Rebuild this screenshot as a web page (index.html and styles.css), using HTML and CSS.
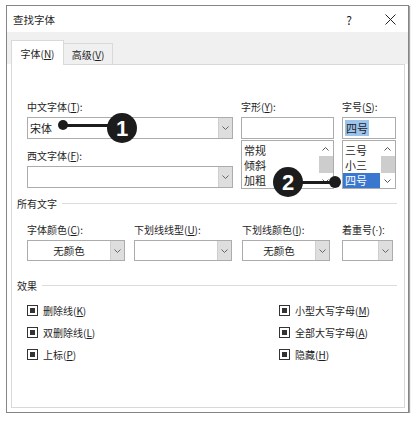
FILE: index.html
```html
<!DOCTYPE html>
<html lang="zh-CN">
<head>
  <meta charset="UTF-8" />
  <title>查找字体</title>
  <link rel="stylesheet" href="styles.css">
</head>
<body>

  <div class="dialog">
    <div class="titlebar">
      <span class="title">查找字体</span>
      <span class="help">?</span>
      <svg class="close" width="11" height="11" viewBox="0 0 11 11">
        <path d="M0.5 0.5 L10.5 10.5 M10.5 0.5 L0.5 10.5" stroke="#222" stroke-width="1" fill="none"/>
      </svg>
    </div>

    <div class="tabs">
      <div class="tab active">字体(<u>N</u>)</div>
      <div class="tab">高级(<u>V</u>)</div>
    </div>

    <div class="panel">
      <!-- font names, style, size -->
      <div class="fonts">
        <div class="col col-name">
          <label>中文字体(<u>T</u>):</label>
          <div class="combo">
            <span class="value">宋体</span>
            <span class="arrow"><svg width="7" height="4" viewBox="0 0 7 4"><path d="M0.5 0.5 L3.5 3.5 L6.5 0.5" stroke="#666" fill="none"/></svg></span>
          </div>
          <label class="second">西文字体(<u>F</u>):</label>
          <div class="combo">
            <span class="value"></span>
            <span class="arrow"><svg width="7" height="4" viewBox="0 0 7 4"><path d="M0.5 0.5 L3.5 3.5 L6.5 0.5" stroke="#666" fill="none"/></svg></span>
          </div>
        </div>

        <div class="col col-style">
          <label>字形(<u>Y</u>):</label>
          <div class="field"></div>
          <div class="list">
            <div class="items">
              <div class="item">常规</div>
              <div class="item">倾斜</div>
              <div class="item">加粗</div>
            </div>
            <div class="scroll">
              <span class="btn"><svg width="7" height="4" viewBox="0 0 7 4"><path d="M0.5 3.5 L3.5 0.5 L6.5 3.5" stroke="#555" fill="none"/></svg></span>
              <span class="thumb"></span>
              <span class="btn"><svg width="7" height="4" viewBox="0 0 7 4"><path d="M0.5 0.5 L3.5 3.5 L6.5 0.5" stroke="#555" fill="none"/></svg></span>
            </div>
          </div>
        </div>

        <div class="col col-size">
          <label>字号(<u>S</u>):</label>
          <div class="field"><span class="picked">四号</span></div>
          <div class="list">
            <div class="items">
              <div class="item">三号</div>
              <div class="item">小三</div>
              <div class="item selected">四号</div>
            </div>
            <div class="scroll">
              <span class="btn"><svg width="7" height="4" viewBox="0 0 7 4"><path d="M0.5 3.5 L3.5 0.5 L6.5 3.5" stroke="#555" fill="none"/></svg></span>
              <span class="thumb"></span>
              <span class="btn"><svg width="7" height="4" viewBox="0 0 7 4"><path d="M0.5 0.5 L3.5 3.5 L6.5 0.5" stroke="#555" fill="none"/></svg></span>
            </div>
          </div>
        </div>
      </div>

      <div class="group">所有文字</div>

      <div class="colors">
        <div class="cell">
          <label>字体颜色(<u>C</u>):</label>
          <div class="combo w1">
            <span class="value center">无颜色</span>
            <span class="arrow"><svg width="7" height="4" viewBox="0 0 7 4"><path d="M0.5 0.5 L3.5 3.5 L6.5 0.5" stroke="#666" fill="none"/></svg></span>
          </div>
        </div>
        <div class="cell">
          <label>下划线线型(<u>U</u>):</label>
          <div class="combo w2">
            <span class="value"></span>
            <span class="arrow"><svg width="7" height="4" viewBox="0 0 7 4"><path d="M0.5 0.5 L3.5 3.5 L6.5 0.5" stroke="#666" fill="none"/></svg></span>
          </div>
        </div>
        <div class="cell">
          <label>下划线颜色(<u>I</u>):</label>
          <div class="combo w3">
            <span class="value center">无颜色</span>
            <span class="arrow"><svg width="7" height="4" viewBox="0 0 7 4"><path d="M0.5 0.5 L3.5 3.5 L6.5 0.5" stroke="#666" fill="none"/></svg></span>
          </div>
        </div>
        <div class="cell">
          <label>着重号<span class="latin">(·):</span></label>
          <div class="combo w4">
            <span class="value"></span>
            <span class="arrow"><svg width="7" height="4" viewBox="0 0 7 4"><path d="M0.5 0.5 L3.5 3.5 L6.5 0.5" stroke="#666" fill="none"/></svg></span>
          </div>
        </div>
      </div>

      <div class="group">效果</div>

      <div class="effects">
        <div class="check"><span class="box"></span>删除线(<u>K</u>)</div>
        <div class="check"><span class="box"></span>小型大写字母(<u>M</u>)</div>
        <div class="check"><span class="box"></span>双删除线(<u>L</u>)</div>
        <div class="check"><span class="box"></span>全部大写字母(<u>A</u>)</div>
        <div class="check"><span class="box"></span>上标(<u>P</u>)</div>
        <div class="check"><span class="box"></span>隐藏(<u>H</u>)</div>
      </div>
    </div>
  </div>

  <!-- numbered callouts drawn over the dialog -->
  <svg class="callouts" width="415" height="421" viewBox="0 0 415 421">
    <circle cx="63" cy="125" r="5" fill="#1c1c1c"/>
    <rect x="66" y="124" width="45" height="3" fill="#1c1c1c"/>
    <circle cx="122" cy="128" r="15" fill="#1c1c1c"/>
    <text x="122" y="136" class="num">1</text>

    <circle cx="335" cy="182" r="6" fill="#1c1c1c"/>
    <rect x="298" y="181" width="36" height="3" fill="#1c1c1c"/>
    <circle cx="288" cy="182" r="15" fill="#1c1c1c"/>
    <text x="288" y="190" class="num">2</text>
  </svg>

</body>
</html>
```

FILE: styles.css
```css
body {
  margin: 0;
  background: #fff;
  font-family: "Noto Sans CJK SC", "Microsoft YaHei", sans-serif;
  font-size: 10px;
  color: #1e1e1e;
}

u {
  text-decoration: underline;
  text-underline-offset: 1px;
}

.latin {
  font-family: "Liberation Sans", Arial, sans-serif;
}

.dialog {
  box-sizing: border-box;
  width: 403px;
  height: 408px;
  margin: 5px 0 0 6px;
  border: 1px solid #858585;
  box-shadow: 1px 1px 1px rgba(0, 0, 0, 0.35);
  background: #fff;
  display: flex;
  flex-direction: column;
}

.titlebar {
  height: 26px;
  display: flex;
  align-items: center;
  padding-left: 6px;
  font-size: 10.5px;
}

.title {
  flex: 1;
}

.help {
  font-size: 12px;
  margin-right: 33px;
}

.close {
  margin-right: 12px;
}

.tabs {
  height: 32px;
  background: #f0f0f0;
  display: flex;
  align-items: flex-end;
  padding-left: 4px;
}

.tab {
  box-sizing: border-box;
  width: 49px;
  height: 21px;
  border: 1px solid #d9d9d9;
  border-bottom: none;
  border-left: none;
  display: flex;
  align-items: center;
  justify-content: center;
  background: #f0f0f0;
}

.tab.active {
  width: 53px;
  height: 25px;
  border-left: 1px solid #d9d9d9;
  background: #fff;
  position: relative;
  z-index: 1;
  margin-bottom: -1px;
}

.panel {
  box-sizing: border-box;
  height: 344px;
  margin: 0 3px 0 4px;
  border: 1px solid #d9d9d9;
  padding: 34px 7px 0 5px;
}

label {
  display: block;
  height: 16px;
  line-height: 16px;
}

.fonts {
  display: flex;
  gap: 8px;
  margin-left: 10px;
}

.col {
  display: flex;
  flex-direction: column;
}

.col-name { width: 206px; }
.col-style { width: 93px; }
.col-size { width: 54px; }

label.second {
  margin-top: 9px;
}

.combo {
  box-sizing: border-box;
  height: 22px;
  margin-top: 2px;
  border: 1px solid #acacac;
  display: flex;
  background: #fff;
}

.combo .value {
  flex: 1;
  padding-left: 2px;
  line-height: 20px;
  font-size: 11px;
}

.combo .value.center {
  text-align: center;
  padding-left: 0;
  font-size: 10.5px;
}

.arrow {
  width: 13px;
  background: #dedede;
  border-left: 1px solid #cfcfcf;
  display: flex;
  align-items: center;
  justify-content: center;
}

.field {
  box-sizing: border-box;
  height: 22px;
  margin-top: 2px;
  border: 1px solid #acacac;
  padding: 3px 0 0 2px;
  line-height: 15px;
  font-size: 11px;
}

.picked {
  background: #9cc4ec;
  padding: 0 1px;
}

.list {
  box-sizing: border-box;
  height: 49px;
  margin-top: 1px;
  border: 1px solid #acacac;
  display: flex;
}

.items {
  flex: 1;
  padding-top: 2px;
  font-size: 11px;
}

.item {
  height: 15px;
  line-height: 15px;
  padding-left: 2px;
}

.item.selected {
  background: #3a78cf;
  color: #fff;
}

.scroll {
  width: 15px;
  display: flex;
  flex-direction: column;
  align-items: center;
  background: #fff;
}

.scroll .btn {
  height: 15px;
  display: flex;
  align-items: center;
  justify-content: center;
}

.scroll .thumb {
  width: 14px;
  flex: 1;
  background: #cdcdcd;
}

.group {
  display: flex;
  align-items: center;
  height: 16px;
  margin-top: 6px;
}

.group::after {
  content: "";
  flex: 1;
  border-top: 1px solid #dcdcdc;
  margin-left: 5px;
}

.colors {
  display: grid;
  grid-template-columns: 107px 108px 100px 51px;
  margin: 11px 0 0 10px;
}

.colors .combo {
  height: 21px;
}

.w1 { width: 98px; }
.w2 { width: 98px; }
.w3 { width: 88px; }
.w4 { width: 51px; }

.colors + .group {
  margin-top: 16px;
}

.effects {
  display: grid;
  grid-template-columns: 252px auto;
  margin: 6px 0 0 10px;
}

.check {
  height: 22px;
  display: flex;
  align-items: center;
}

.box {
  box-sizing: border-box;
  width: 11px;
  height: 11px;
  border: 1px solid #333;
  background: #fff;
  margin-right: 5px;
  display: flex;
  align-items: center;
  justify-content: center;
}

.box::after {
  content: "";
  width: 5px;
  height: 5px;
  background: #333;
}

.callouts {
  position: absolute;
  top: 0;
  left: 0;
  pointer-events: none;
}

.num {
  fill: #fff;
  font-family: "Liberation Sans", Arial, sans-serif;
  font-size: 22px;
  font-weight: bold;
  text-anchor: middle;
}
```
